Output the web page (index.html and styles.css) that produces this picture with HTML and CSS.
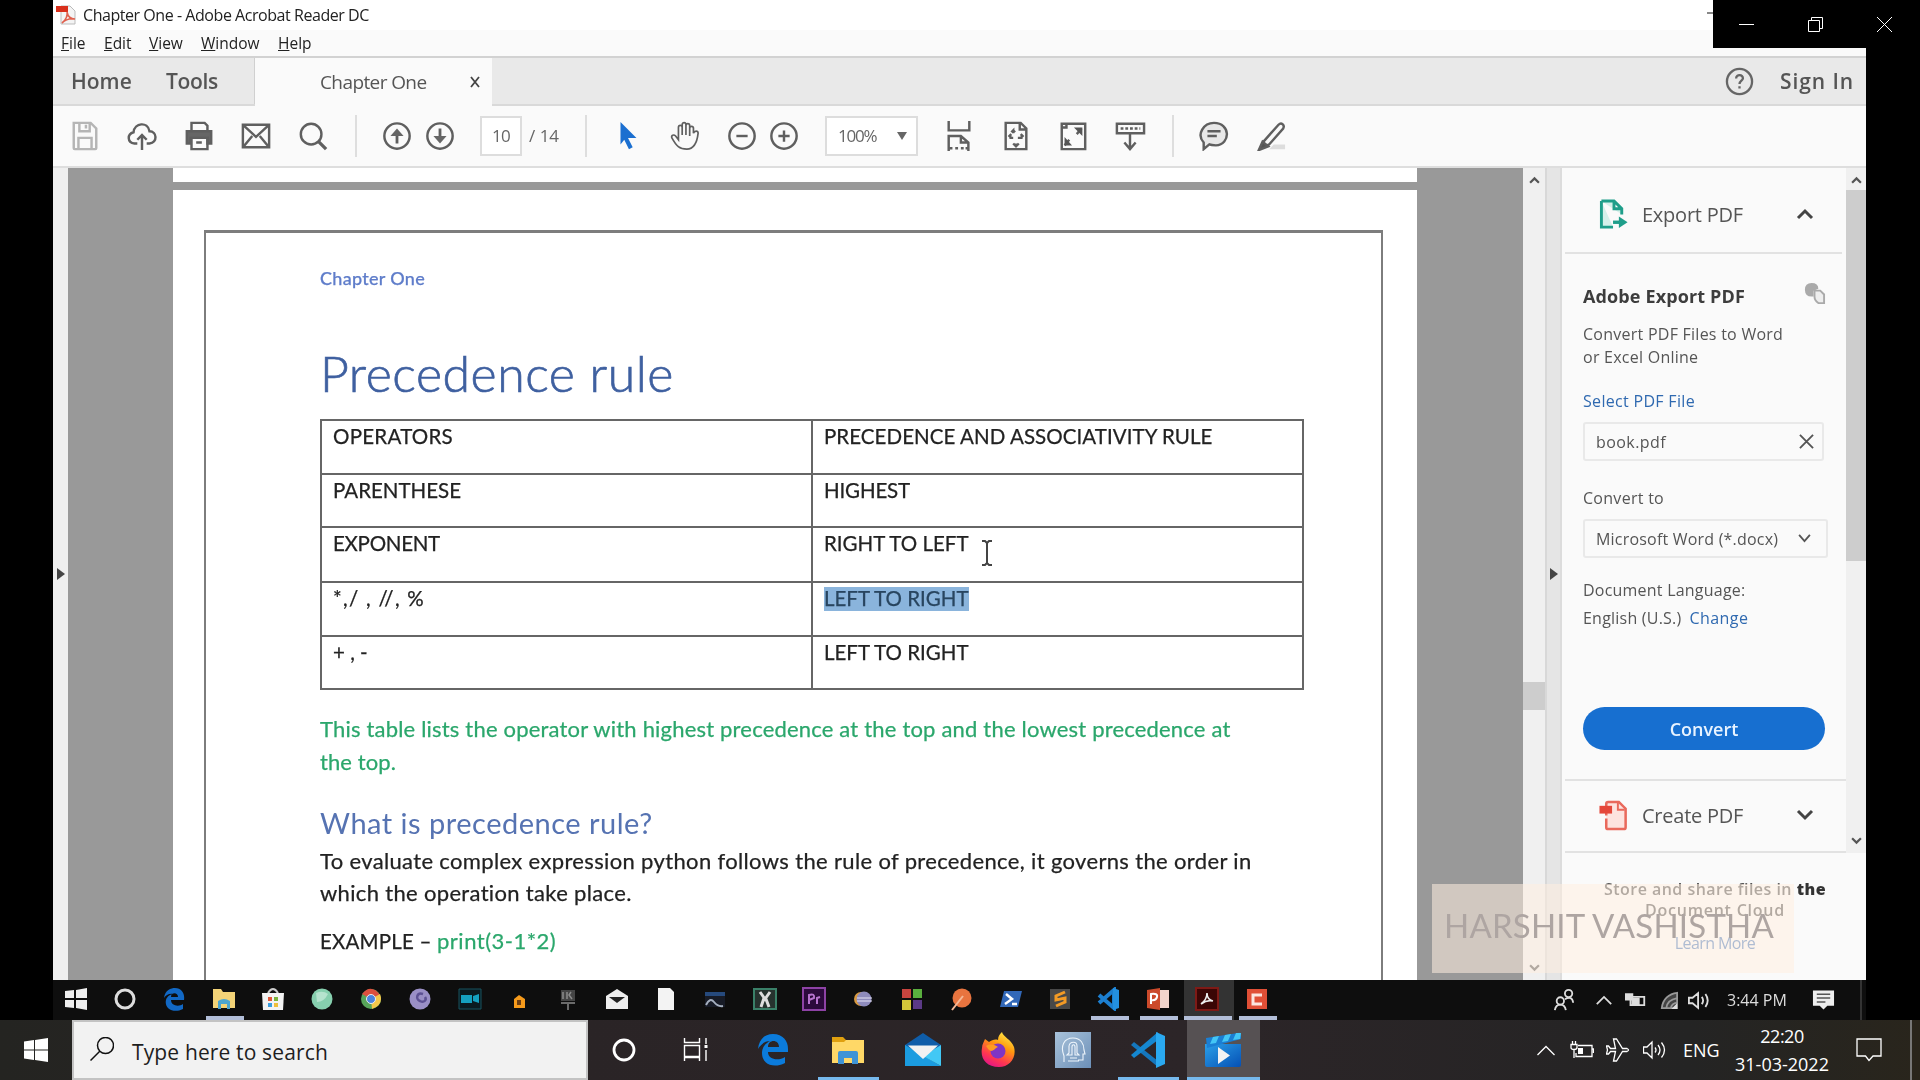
FILE: index.html
```html
<!DOCTYPE html>
<html lang="en">
<head>
<meta charset="utf-8">
<title>Chapter One - Adobe Acrobat Reader DC</title>
<link rel="stylesheet" href="styles.css">
</head>
<body>
<main class="player">
  <section class="capture">
    <div class="titlebar">
      <svg class="pdf-mini" viewBox="0 0 20 20"><path d="M5 1h9l5 5v13H5z" fill="#f4f4f4" stroke="#bbb"/><path d="M0 1h12v6H0z" fill="#d9301c"/><path d="M6 18c4-3 6-8 5-11 1 5 4 7 8 7-5-1-9 0-13 4z" fill="none" stroke="#e0604e" stroke-width="1.6"/></svg>
      <span class="t-title">Chapter One - Adobe Acrobat Reader DC</span>
      <i class="min-hint"></i>
    </div>
    <nav class="menubar">
      <span class="m-file"><u>F</u>ile</span><span class="m-edit"><u>E</u>dit</span><span class="m-view"><u>V</u>iew</span><span class="m-window"><u>W</u>indow</span><span class="m-help"><u>H</u>elp</span>
    </nav>
    <div class="tabs">
      <div class="tabs-left"><span class="t-home">Home</span><span class="t-tools">Tools</span></div>
      <div class="tab"><span class="t-tab">Chapter One</span><svg class="tab-x" viewBox="0 0 10 12"><path d="M1 1l8 10M9 1L1 11" stroke="#444" stroke-width="1.8"/></svg></div>
      <div class="tabs-right">
        <svg class="help" viewBox="0 0 30 30"><circle cx="15" cy="15" r="13" fill="none" stroke="#666" stroke-width="2.400"/><path d="M11.500 12c0-5 7.500-4.500 7 0-.3 2-3.500 2.500-3.500 5.500M15 20v2.300" fill="none" stroke="#666" stroke-width="2.400"/></svg>
        <span class="t-sign">Sign In</span>
      </div>
    </div>
    <div class="toolbar">
      <div class="group">
        <svg class="ic faint" viewBox="0 0 32 32"><path d="M4 2h18l6 6v21q0 1-1 1H5q-1 0-1-1zM10 2v9h11V2M9 30V18h14v12M17 4v4"/></svg>
        <svg class="ic" viewBox="0 0 32 32"><path d="M11 24H8c-8-1-8-10-1-12C8 2 22 0 24 11c8 0 9 12 0 13h-3M16 31V15M11 20l5-5 5 5"/></svg>
        <svg class="ic" viewBox="0 0 32 32"><path d="M8 10V2h14l3 3v5"/><path d="M3 11h26v13h-4v-6H7v6H3z" fill="#666"/><path d="M8 18h17v12H8zM13 23h6"/></svg>
        <svg class="ic" viewBox="0 0 32 32"><path d="M2 4h28v24H2zM3 5l13 12L29 5M3 27l9-11M29 27l-9-11"/></svg>
        <svg class="ic" viewBox="0 0 32 32"><circle cx="14" cy="14" r="11"/><path d="M22 22l8 8" stroke-width="3.500"/></svg>
      </div>
      <i class="sep"></i>
      <div class="group tight">
        <svg class="ic" viewBox="0 0 32 32"><circle cx="16" cy="16" r="13.500"/><path d="M16 24v-9" stroke-width="3"/><path d="M16 8l7 8H9z" fill="#666" stroke="none"/></svg>
        <svg class="ic" viewBox="0 0 32 32"><circle cx="16" cy="16" r="13.500"/><path d="M16 8v9" stroke-width="3"/><path d="M16 24l7-8H9z" fill="#666" stroke="none"/></svg>
      </div>
      <span class="pagebox"><span class="t-10">10</span></span><span class="t-14">/ 14</span>
      <i class="sep s2"></i>
      <div class="group">
        <svg class="ic" viewBox="0 0 32 32"><path d="M8 1l17 17h-9l5 10-4 2-5-10-4 5z" fill="#1b6fd0" stroke="none"/></svg>
        <svg class="ic" viewBox="0 0 32 32"><path d="M9 20V7c0-3 4-3 4 0v8V4c0-3 4-3 4 0v11V5c0-3 4-3 4 0v11V8c0-3 4-3 4 0v-1 6c1-3 5-3 5 0-1 9-4 17-12 17C10 30 7 27 2 18c-1-3 2-4 4-2l3 4z" stroke-width="1.800"/></svg>
        <svg class="ic" viewBox="0 0 32 32"><circle cx="16" cy="16" r="13.500"/><path d="M10 16h12"/></svg>
      </div>
      <svg class="ic plus" viewBox="0 0 32 32"><circle cx="16" cy="16" r="13.500"/><path d="M10 16h12M16 10v12"/></svg>
      <span class="zoombox"><span class="t-100">100%</span><i class="caret"></i></span>
      <div class="group">
        <svg class="ic" viewBox="0 0 32 32"><path d="M5 0v10h22V0M5 32V16h13l8 7v9M18 16v7h8M5 29h4M12 29h3M18 29h3M23 29h3"/></svg>
        <svg class="ic" viewBox="0 0 32 32"><path d="M5 2h16l6 6v22H5zM20 2v7h7M13 13v-3l-2 2M13 10l2 2M9 18h4M18 18h5M16 24v2M11 14l-2 2 2 2M21 14l2 2-2 2M13 24l3 3 3-3"/></svg>
        <svg class="ic" viewBox="0 0 32 32"><path d="M4 3h25v27H4zM9 3v4H4M20 14l5-6M12 20l-5 6"/><path d="M17 7h9v9zM15 26H7v-9z" fill="#555" stroke="none"/></svg>
        <svg class="ic" viewBox="0 0 32 32"><path d="M2 3h29v10H2zM6 8h3M11 8h3M16 8h3M21 8h3M26 8h1M16 14v15M10 23l6 7 6-7"/></svg>
      </div>
      <i class="sep s3"></i>
      <div class="group">
        <svg class="ic" viewBox="0 0 32 32"><path d="M5 30v-7C-3 14 5 2 16 2c18 0 18 23 2 24-4 0-5 0-7-1z" fill="#e8e8e8"/><path d="M9 11h14M9 16h10"/></svg>
        <svg class="ic" viewBox="0 0 32 32"><path d="M14 30h17v-5H19z" fill="#ddd" stroke="none"/><path d="M8 22L24 4c3-3 7 0 5 4L14 25c-2 2-7 0-6-3z"/><path d="M7 22l6 5-10 4z" fill="#555"/></svg>
      </div>
    </div>
    <div class="work">
      <div class="rail"><i class="tri"></i></div>
      <div class="canvas">
        <div class="prev-page"></div>
        <article class="page">
          <div class="frame">
            <div class="running"><span class="t-run">Chapter One</span></div>
            <h1><span class="t-h1">Precedence rule</span></h1>
            <table>
              <tr><td><span class="c1">OPERATORS</span></td><td><span class="c2">PRECEDENCE AND ASSOCIATIVITY RULE</span></td></tr>
              <tr><td><span class="c3">PARENTHESE</span></td><td><span class="c4">HIGHEST</span></td></tr>
              <tr class="tall"><td><span class="c5">EXPONENT</span></td><td class="rtl"><span class="c6">RIGHT TO LEFT</span><svg class="ibeam" viewBox="0 0 12 26"><path d="M1 1h3l2 2 2-2h3M6 3v20M1 25h3l2-2 2 2h3" fill="none" stroke="#444" stroke-width="2"/></svg></td></tr>
              <tr><td><span class="c7">*,/ , //, %</span></td><td><mark><span class="c8">LEFT TO RIGHT</span></mark></td></tr>
              <tr><td><span class="c9">+ , -</span></td><td><span class="c10">LEFT TO RIGHT</span></td></tr>
            </table>
            <p class="green"><span class="p1">This table lists the operator with highest precedence at the top and the lowest precedence at</span><br><span class="p2">the top.</span></p>
            <h2><span class="t-h2">What is precedence rule?</span></h2>
            <p class="body"><span class="p3">To evaluate complex expression python follows the rule of precedence, it governs the order in</span><br><span class="p4">which the operation take place.</span></p>
            <p class="example"><span class="p5">EXAMPLE – </span><span class="p6">print(3-1*2)</span></p>
          </div>
        </article>
      </div>
      <div class="scroll s-doc"><svg class="chev" viewBox="0 0 10 7"><path d="M1 6l4-4 4 4"/></svg><i class="thumb"></i><svg class="chev down" viewBox="0 0 10 7"><path d="M1 1l4 4 4-4"/></svg></div>
      <div class="splitter"><i class="tri"></i></div>
      <aside>
        <div class="aside-top">
          <div class="tools">
            <div class="tool export">
              <svg viewBox="0 0 30 32"><path d="M2 2h13l8 8v6M2 2v27h12M15 2v8h8" fill="#d5f0ea" stroke="#1f9e8a" stroke-width="3"/><path d="M14 24h8" stroke="#1f9e8a" stroke-width="3.500"/><path d="M20 18l9 6-9 6z" fill="#1f9e8a"/></svg>
              <span class="t-exp">Export PDF</span><svg class="arrow" viewBox="0 0 18 12"><path d="M2 10l7-7 7 7"/></svg>
            </div>
            <div class="form">
              <div class="form-title"><span class="t-aep">Adobe Export PDF</span><svg viewBox="0 0 24 24"><path d="M2 8q0-7 7-7t7 6l-5 2v6q-9 1-9-7z" fill="#aaa"/><path d="M12 9h6l4 4v9h-6q-4-3-4-7z" fill="#eee" stroke="#aaa" stroke-width="2"/></svg></div>
              <p class="desc"><span class="a1">Convert PDF Files to Word</span><br><span class="a2">or Excel Online</span></p>
              <p class="link"><span class="a3">Select PDF File</span></p>
              <div class="field"><span class="a4">book.pdf</span><svg viewBox="0 0 16 16"><path d="M1 1l14 14M15 1L1 15"/></svg></div>
              <p class="label"><span class="a5">Convert to</span></p>
              <div class="field wide"><span class="a6">Microsoft Word (*.docx)</span><svg class="v" viewBox="0 0 14 10"><path d="M1 1l6 7 6-7"/></svg></div>
              <p class="lang"><span class="a7">Document Language:</span><br><span class="a8">English (U.S.)</span><span class="a9">Change</span></p>
              <button><span class="a10">Convert</span></button>
            </div>
            <div class="tool create">
              <svg viewBox="0 0 30 32"><path d="M7 16V4q0-2 2-2h11l7 7v19q0 2-2 2H9q-2 0-2-2v-9" fill="#fde3df" stroke="#e9695c" stroke-width="2.600"/><path d="M0 6h13v8H0z" fill="#e5473a"/><path d="M19 3v7h7" fill="none" stroke="#e9695c" stroke-width="2"/></svg>
              <span class="t-cre">Create PDF</span><svg class="arrow" viewBox="0 0 18 12"><path d="M2 2l7 7 7-7"/></svg>
            </div>
          </div>
          <div class="scroll s-aside"><svg class="chev" viewBox="0 0 10 7"><path d="M1 6l4-4 4 4"/></svg><i class="thumb"></i><svg class="chev down" viewBox="0 0 10 7"><path d="M1 1l4 4 4-4"/></svg></div>
        </div>
        <div class="promo"><span class="b1">Store and share files in <b>the</b></span><span class="b2">Document Cloud</span><span class="b3">Learn More</span></div>
      </aside>
      <div class="watermark"><span class="t-wm">HARSHIT VASHISTHA</span></div>
    </div>
    <div class="bar1">
      <div class="apps1">
        <span><svg viewBox="0 0 24 24"><path d="M1 4l9-1v8H1zM12 3l11-2v10H12zM1 13h9v8l-9-1zM12 13h11v10l-11-2z" fill="#eee"/></svg></span>
        <span><svg viewBox="0 0 24 24"><circle cx="12" cy="12" r="9" fill="none" stroke="#ddd" stroke-width="3"/></svg></span>
        <span><svg viewBox="0 0 24 24"><path d="M2 11C3 3 9 1 13 1c7 0 10 6 9 12H9c0 6 8 7 12 4v5C11 27 2 21 4 13c1-4 5-6 8-6-5-1-8 1-10 4zM9 10h7c0-5-7-5-7 0z" fill="#1268c4" fill-rule="evenodd"/></svg></span>
        <span class="on"><svg viewBox="0 0 24 24"><path d="M1 2h8l2 3h12v16H1z" fill="#f3d377"/><path d="M6 22v-8q6-4 12 0v8h-3v-5H9v5z" fill="#4ba5cf"/></svg></span>
        <span><svg viewBox="0 0 24 24"><path d="M7 6q5-8 10 0" fill="none" stroke="#ccc" stroke-width="2"/><path d="M1 6h22l-1 17H2z" fill="#f3f3f3"/><path d="M7 10h4v4H7z" fill="#e0593a"/><path d="M13 10h4v4h-4z" fill="#7ab53c"/><path d="M7 16h4v4H7z" fill="#3a9ee0"/><path d="M13 16h4v4h-4z" fill="#efc03a"/></svg></span>
        <span><svg viewBox="0 0 24 24"><circle cx="12" cy="12" r="10.500" fill="#86cfae"/><path d="M6 6q7-3 12 1-4 8-11 8z" fill="#b5e3ce"/></svg></span>
        <span><svg viewBox="0 0 24 24"><circle cx="12" cy="12" r="10" fill="#58a45a"/><path d="M12 12L3 7q9-11 18 1z" fill="#dd4f3e"/><path d="M12 12l9-5q4 11-8 15z" fill="#f3c84b"/><circle cx="12" cy="12" r="4.500" fill="#4c83dd" stroke="#eee"/></svg></span>
        <span><svg viewBox="0 0 24 24"><circle cx="12" cy="12" r="10.500" fill="#9a8fc6"/><path d="M15 7c-6-2-8 5-3 7 4 2 7-1 5-4" fill="none" stroke="#5d5193" stroke-width="2.500"/></svg></span>
        <span><svg viewBox="0 0 24 24"><path d="M1 2h22v20H1z" fill="#0a1a20" stroke="#17525f"/><path d="M3 8h11v8H3zM15 9l6-2v9l-6-2z" fill="#15a0c0"/></svg></span>
        <span><svg viewBox="0 0 24 24"><path d="M7 21V12l5-4 6 4v9z" fill="#f59a1b"/><path d="M10 13h4v5h-4z" fill="#6b3d12"/></svg></span>
        <span><svg viewBox="0 0 24 24"><path d="M5 3h14v11H5z" fill="#444"/><path d="M7 5v7M11 5v7M15 5l-2 3 3 4M5 16h14M12 17v6" stroke="#8b8b8b" fill="none" stroke-width="1.500"/></svg></span>
        <span><svg viewBox="0 0 24 24"><path d="M1 9l11-7 11 7v13H1z" fill="#eee"/><path d="M4 10h16l-8 6z" fill="#222"/></svg></span>
        <span><svg viewBox="0 0 24 24"><path d="M4 1h12l4 4v18H4z" fill="#f3f3f3"/></svg></span>
        <span><svg viewBox="0 0 24 24"><path d="M2 5h20v4H2z" fill="#264a7d"/><path d="M2 9h20v11H2z" fill="#171b26"/><path d="M3 18q4-8 8-3t9 4" fill="none" stroke="#a5afbf" stroke-width="2"/></svg></span>
        <span><svg viewBox="0 0 24 24"><path d="M1 2h22v20H1z" fill="#26322e" stroke="#3a8068" stroke-width="2"/><path d="M7 5l5 7 5-7M8 20l3-9M16 20l-3-8" stroke="#ddd" stroke-width="3" fill="none"/></svg></span>
        <span><svg viewBox="0 0 24 24"><path d="M1 1h22v22H1z" fill="#2c0a3c" stroke="#8d42a5" stroke-width="2"/><path d="M7 17V8q6-2 5 3l-5 2M15 17v-6l3-1" stroke="#b873cf" stroke-width="2" fill="none"/></svg></span>
        <span><svg viewBox="0 0 24 24"><circle cx="10" cy="12" r="7" fill="#d99a3f"/><circle cx="13" cy="12" r="7.500" fill="#8e8bbd"/><path d="M6 11h15M6 14h15" stroke="#e5e3f5"/></svg></span>
        <span><svg viewBox="0 0 24 24"><path d="M2 2h9v9H2z" fill="#c8443e"/><path d="M13 2h9v9h-9z" fill="#5aaf3e"/><path d="M2 13h9v10H2z" fill="#d3c73a"/><path d="M13 13h9v9h-9z" fill="#5b3a86"/></svg></span>
        <span><svg viewBox="0 0 24 24"><circle cx="13" cy="11" r="9.500" fill="#e8743f"/><path d="M3 23l11-14" stroke="#f5b896" stroke-width="2"/></svg></span>
        <span><svg viewBox="0 0 24 24"><path d="M5 4h18l-4 16H1z" fill="#3268b8"/><path d="M7 7l6 5-7 5M13 17h5" stroke="#fff" stroke-width="2.500" fill="none"/></svg></span>
        <span><svg viewBox="0 0 24 24"><path d="M2 2h20v20H2z" fill="#484848"/><path d="M17 5L8 9v4l9-2v4l-9 4" stroke="#f29a25" stroke-width="3" fill="none"/></svg></span>
        <span class="on"><svg viewBox="0 0 24 24"><path d="M2 8l15 13V3L2 16" fill="none" stroke="#1c7fd0" stroke-width="4"/><path d="M16 1l6 2v18l-6 2z" fill="#2390e0"/></svg></span>
        <span class="on"><svg viewBox="0 0 24 24"><path d="M12 3h11v18H12z" fill="#f2d5cc"/><path d="M1 3l13-2v22L1 21z" fill="#cc4a2b"/><path d="M5 17V7q7-1 6 3t-6 3" stroke="#fff" stroke-width="2" fill="none"/></svg></span>
        <span class="on active"><svg viewBox="0 0 24 24"><path d="M1 1h22v22H1z" fill="#3a0605" stroke="#7e1a16" stroke-width="2"/><path d="M6 17c4-3 6-7 6-11 0 5 2 7 6 8-4-1-8 0-12 3z" fill="none" stroke="#eee" stroke-width="1.600"/></svg></span>
        <span class="on"><svg viewBox="0 0 24 24"><path d="M2 2h20v20H2z" fill="#e04f36"/><path d="M17 8H8v9h9" fill="none" stroke="#fbe5df" stroke-width="3"/></svg></span>
      </div>
      <div class="tray1">
        <svg class="x1" viewBox="0 0 24 24"><circle cx="17" cy="5" r="4"/><circle cx="8" cy="13" r="4"/><path d="M2 23q1-6 6-6t6 6M13 11q8-4 9 4"/></svg>
        <svg class="x2" viewBox="0 0 20 12"><path d="M2 10l8-8 8 8"/></svg>
        <svg class="x3" viewBox="0 0 24 16"><path d="M6 4h15v9H6z"/><path d="M8 6h7v6H8zM1 1h7v6H1z" fill="#ddd"/></svg>
        <svg class="x4" viewBox="0 0 20 20"><path d="M2 19C3 9 10 3 19 2v17zM7 19q1-9 12-11M12 19q1-5 7-6" fill="#444" stroke="#999"/><path d="M15 19l3-3v3z" fill="#fff"/></svg>
        <svg class="x5" viewBox="0 0 24 20"><path d="M1 7h4l6-5v16l-6-5H1zM15 6q3 4 0 8M19 3q5 7 0 14"/></svg>
        <span class="t-344">3:44 PM</span>
        <svg class="x6" viewBox="0 0 24 22"><path d="M1 1h22v16h-7l-4 4-4-4H1z" fill="#eee" stroke="none"/><path d="M5 5h14M5 9h14M5 13h9" stroke="#555" stroke-width="1.500"/></svg>
      </div>
    </div>
  </section>
  <div class="winctl">
    <svg viewBox="0 0 15 15"><path d="M0 7.500h15"/></svg>
    <svg viewBox="0 0 15 15"><path d="M.5 3.500h11v11H.5zM3.500 3.500v-3h11v11h-3"/></svg>
    <svg viewBox="0 0 15 15"><path d="M0 0l15 15M15 0L0 15"/></svg>
  </div>
</main>
<footer class="bar2">
  <div class="start"><svg viewBox="0 0 24 24"><path d="M0 3.400L10 2v9.500H0zM11 1.900L24 0v11.500H11zM0 12.500h10V22L0 20.600zM11 12.500h13V24l-13-1.900z" fill="#fff"/></svg></div>
  <div class="search"><svg viewBox="0 0 24 24"><circle cx="15.500" cy="8.500" r="8"/><path d="M10 14L.5 23.500"/></svg><span class="t-search">Type here to search</span></div>
  <div class="apps2">
    <span class="cortana"><svg viewBox="0 0 36 36"><circle cx="18" cy="18" r="10" fill="none" stroke="#fff" stroke-width="2.800"/></svg></span>
    <span class="taskview"><svg viewBox="0 0 36 36"><path d="M6.500 6v4.500h15V6M6.500 13.500h15v11h-15zM6.500 29v-3.500h15V29M28 6v6M28 18v11" fill="none" stroke="#fff" stroke-width="1.400"/><path d="M26.500 13h3v3h-3z" fill="#fff"/></svg></span>
    <span><svg viewBox="0 0 36 36"><path d="M3 17C4 7 10 2 18 2c10 0 15 7 15 15v3H13c0 8 11 9 17 5v6c-12 6-23 1-23-10 0-6 4-10 8-12-5 0-9 3-12 8zM13 15h11c0-8-11-8-11 0z" fill="#0b7bdb" fill-rule="evenodd"/></svg></span>
    <span class="on"><svg viewBox="0 0 36 36"><path d="M2 5h11l3 3h18v10H2z" fill="#e0a00f"/><path d="M2 10h12l2-2h18v23H2z" fill="#ffd867"/><path d="M8 32V21q0-2 2-2h16q2 0 2 2v11h-6v-6h-8v6z" fill="#3f94d6"/></svg></span>
    <span><svg viewBox="0 0 36 36"><path d="M0 13L18 1l18 12v5H0z" fill="#0f5da9"/><path d="M0 13l36 21H0z" fill="#1b9ce0"/><path d="M36 13v21L18 24z" fill="#42c8f5"/><path d="M3 13.500h30L18 27z" fill="#f2f2f2"/></svg></span>
    <span><svg viewBox="0 0 36 36"><defs><linearGradient id="ff" x1=".8" y1="0" x2=".3" y2="1"><stop offset="0" stop-color="#fff04a"/><stop offset=".4" stop-color="#ff980e"/><stop offset=".75" stop-color="#ff3750"/><stop offset="1" stop-color="#e31587"/></linearGradient></defs><path d="M5 7l4 3c3-2 6-3 9-2 0-4 2-6 4-8 1 5 9 7 12 15 3 11-5 20-15 20C6 35 0 26 2 16c0-4 2-6 3-9z" fill="url(#ff)"/><circle cx="18" cy="19" r="7.500" fill="#7f35c5"/><path d="M6 14c4-2 7-2 12 1-3 1-4 4-7 4-3-1-3-3-5-5z" fill="#ff9b22"/></svg></span>
    <span><svg viewBox="0 0 36 36"><defs><linearGradient id="hd" x2="1" y2="1"><stop stop-color="#a9c2da"/><stop offset="1" stop-color="#6c90b8"/></linearGradient></defs><path d="M0 0h36v36H0z" fill="url(#hd)"/><path d="M9 30v-6C5 14 9 6 18 6c8 0 11 6 11 12l1 4h-2v6h-5M13 29h11M15 26h7M12 23l2-2v-7c1-5 8-5 8 0v7l2 2h-4v-8c0-3-3-3-3 0v8z" fill="none" stroke="#eef5fb" stroke-width="1.100"/></svg></span>
    <span class="on"><svg viewBox="0 0 36 36"><path d="M1 13l3-3 24 19v6z" fill="#1577bd"/><path d="M1 23l3 3L28 8V0z" fill="#1587d0"/><path d="M26 0l9 4v28l-9 4z" fill="#2aa9f0"/></svg></span>
    <span class="on active"><svg viewBox="0 0 36 36"><defs><linearGradient id="mv" x2="1" y2="1"><stop stop-color="#2ba0e8"/><stop offset="1" stop-color="#0550b5"/></linearGradient></defs><path d="M0 12h36v21q0 2-2 2H2q-2 0-2-2z" fill="url(#mv)"/><path d="M1 6L33 1q3-1 3 2v4L2 16z" fill="#1a7fd4"/><path d="M8 5l6-1-3 7-6 1zM20 3l6-1-3 7-6 1zM31 1l5 0-1 6-7 1z" fill="#43c6f5"/><path d="M13 15l12 8.500L13 32z" fill="#f2f2f2"/></svg></span>
  </div>
  <div class="tray2">
    <svg class="y1" viewBox="0 0 18 11"><path d="M.5 10L9 1.500 17.500 10"/></svg>
    <svg class="y2" viewBox="0 0 24 18"><path d="M8 4.500h14v11H6V12M22.500 8h1v4M1 3.500h6v3q0 2-3 2t-3-2zM2.500 0v3M5.500 0v3M4 9v8"/><path d="M8 7h5v6H8z" fill="#fff" stroke="none"/></svg>
    <svg class="y3" viewBox="0 0 24 24"><path d="M.5 8h2l2 2.500h5L7.500 1h3l6 9.500H21q3 1.500 0 3h-4.500l-6 9.500h-3l2-9.500h-5L2.500 16h-2l1-4z"/></svg>
    <svg class="y4" viewBox="0 0 24 20"><path d="M.5 7H4l5-5v16l-5-5H.5zM12 7.500q2 2.500 0 5M15 5q4 5 0 10M18.500 2.500q6 7.500 0 15"/></svg>
    <span class="t-eng">ENG</span>
    <div class="clock"><span class="t-time">22:20</span><span class="t-date">31-03-2022</span></div>
    <svg class="y5" viewBox="0 0 26 24"><path d="M1 1h24v17h-8l-4 4.500L9.500 18H1z"/></svg>
    <i class="peek"></i>
  </div>
</footer>
</body>
</html>
```
FILE: styles.css
```css
* { box-sizing: border-box; }
body { margin: 0; width: 1920px; height: 1080px; overflow: hidden; background: #000; font-family: "Open Sans", "Noto Sans", sans-serif; color: #555; }
p, h1, h2 { margin: 0; font-weight: 400; }
svg { display: block; flex: none; }
span { white-space: nowrap; }

/* video frame */
.player { position: relative; height: 1020px; padding-left: 53px; background: #000; }
.capture { width: 1813px; height: 1020px; display: flex; flex-direction: column; background: #fff; overflow: hidden; filter: blur(.7px); }
.titlebar { height: 30px; display: flex; align-items: center; padding-left: 3px; background: #fff; color: #222; font-size: 16px; }
.t-title { letter-spacing: -.45px; }
.pdf-mini { width: 20px; height: 20px; margin-right: 7px; }
.min-hint { width: 8px; height: 2px; margin: -4px 0 0 1338px; background: #888; }
.menubar { height: 26px; display: flex; align-items: center; background: #fafafa; padding-left: 8px; font-size: 15.5px; color: #222; }
.menubar span { flex: none; }
.m-file { width: 43px; } .m-edit { width: 45px; } .m-view { width: 52px; } .m-window { width: 77px; }

/* tabs */
.tabs { height: 50px; display: flex; align-items: stretch; background: #e9e9e9; border-top: 2px solid #d2d2d2; border-bottom: 2px solid #d9d9d9; }
.tabs-left { width: 202px; display: flex; align-items: center; padding-left: 18px; font-size: 21px; font-weight: 600; border-right: 1px solid #d0d0d0; }
.t-home { width: 95px; }
.t-tools { letter-spacing: -.32px; }
.tab { width: 237px; margin-bottom: -2px; display: flex; align-items: center; padding-left: 65px; background: #fafafa; font-size: 19px; color: #555; }
.t-tab { letter-spacing: -.6px; }
.tab-x { width: 10px; height: 12px; margin-left: auto; margin-right: 12px; }
.tabs-right { flex: 1; display: flex; align-items: center; justify-content: flex-end; padding-right: 12px; gap: 26px; font-size: 21px; font-weight: 600; }
.t-sign { letter-spacing: .9px; }
.help { width: 29px; height: 29px; }

/* toolbar */
.toolbar { height: 62px; display: flex; align-items: center; padding: 0 0 1px 16px; background: #fafafa; border-bottom: 2px solid #dedede; font-size: 17px; color: #666; }
.group { display: flex; gap: 25px; }
.tight { gap: 11px; }
.ic { width: 32px; height: 30px; fill: none; stroke: #5f5f5f; stroke-width: 2.6; }
.faint { stroke: #b5b5b5; }
.sep { width: 2px; height: 42px; margin: 0 24px 0 26px; background: #dedede; }
.s2 { margin: 0 25px 0 23px; }
.s3 { margin: 0 24px 0 26px; }
.pagebox { width: 42px; height: 40px; margin: 0 7px 0 24px; display: flex; align-items: center; justify-content: center; border: 2px solid #ddd; background: #fff; }
.t-10 { letter-spacing: -.6px; }
.t-14 { width: 33px; }
.plus { margin-left: 10px; }
.zoombox { width: 93px; height: 40px; margin: 0 25px 0 25px; padding: 0 9px 0 11px; display: flex; align-items: center; justify-content: space-between; border: 2px solid #ddd; background: #fff; }
.t-100 { letter-spacing: -1.2px; }
.caret { border: 5px solid transparent; border-top: 8px solid #666; border-bottom: 0; }

/* document */
.work { position: relative; height: 812px; display: flex; }
.rail { width: 15px; background: #efefef; display: flex; align-items: center; padding-left: 4px; }
.tri { border: 6px solid transparent; border-left: 8px solid #444; border-right: 0; }
.canvas { width: 1455px; padding: 0 106px 0 105px; background: #999; }
.prev-page { height: 14px; background: #fff; }
.page { height: 790px; margin-top: 8px; padding: 40px 34px 0 31px; background: #fff; }
.frame { height: 750px; border: 2px solid #7d7d7d; border-top-width: 3px; border-bottom: 0; padding: 32px 0 0 114px; font-family: Lato, "Open Sans", sans-serif; font-size: 20.5px; color: #222; -webkit-text-stroke: .25px currentColor; }
.running { height: 26px; line-height: 26px; font-size: 18px; color: #5f7dca; font-weight: 500; letter-spacing: .3px; }
h1 { height: 128px; padding-top: 52px; line-height: 60px; font-size: 50px; font-weight: 300; color: #3f60a0; letter-spacing: .52px; -webkit-text-stroke: .7px currentColor; }
table { width: 984px; border-collapse: collapse; table-layout: fixed; }
tr { height: 53.5px; } .tall { height: 55px; }
td { border: 2px solid #666; padding: 0 0 0 11px; vertical-align: top; line-height: 30px; }
.c1 { letter-spacing: .26px; } .c2 { letter-spacing: .06px; } .c4 { letter-spacing: -.16px; } .c5 { letter-spacing: -.27px; } .c7 { letter-spacing: 1.27px; }
.rtl { position: relative; }
.ibeam { position: absolute; left: 168px; top: 12px; width: 12px; height: 26px; }
mark { display: inline-block; height: 24px; line-height: 23px; background: #8ab4dc; color: #28455f; margin-top: 4px; }
.green { padding-top: 22px; line-height: 33px; font-size: 22px; color: #2ba76c; }
.p1 { letter-spacing: .19px; } .p2 { letter-spacing: .1px; } .p3 { letter-spacing: .35px; } .p4 { letter-spacing: .33px; }
h2 { padding-top: 25px; line-height: 40px; font-size: 29px; color: #5673b2; letter-spacing: .5px; -webkit-text-stroke: 0; }
.body { padding-top: 2px; line-height: 32px; font-size: 22px; }
.example { padding-top: 16px; line-height: 32px; }
.p5 { white-space: pre; letter-spacing: .19px; } .p6 { font-size: 22px; color: #2ba76c; letter-spacing: .5px; }

.scroll { display: flex; flex-direction: column; align-items: center; background: #f0f0f0; }
.scroll .thumb { width: 100%; background: #cdcdcd; }
.chev { width: 11px; height: 8px; fill: none; stroke: #555; stroke-width: 2; }
.down { margin-top: auto; }
.s-doc { width: 22px; padding: 8px 0; } .s-doc .thumb { height: 28px; margin-top: 498px; }
.splitter { width: 17px; display: flex; align-items: center; padding-left: 3px; background: #e5e5e5; border-left: 2px solid #d8d8d8; border-right: 2px solid #dcdcdc; }

/* tools pane */
aside { width: 304px; background: #fafafa; }
.aside-top { display: flex; height: 685px; }
.tools { width: 284px; }
.tool { display: flex; align-items: center; font-size: 20px; color: #555; letter-spacing: -.24px; }
.tool > svg:first-child { width: 30px; height: 31px; margin-right: 13px; }
.tool .arrow { width: 18px; height: 12px; margin: 0 32px 0 auto; fill: none; stroke: #444; stroke-width: 3; }
.export { height: 86px; padding: 8px 0 0 34px; border-bottom: 2px solid #e2e2e2; margin: 0 4px 0 3px; }
.tool.export .arrow { margin-right: 28px; }
.form { height: 525px; padding: 28px 0 0 21px; font-size: 16px; }
.form-title { height: 28px; display: flex; justify-content: space-between; align-items: center; padding-right: 20px; font-size: 18px; font-weight: 700; color: #3d3d3d; }
.form-title svg { width: 23px; height: 23px; margin-top: -6px; }
.t-aep { letter-spacing: .13px; }
.desc { padding-top: 13px; line-height: 23px; letter-spacing: .25px; }
.link { padding-top: 20px; line-height: 24px; color: #2f69b0; letter-spacing: .31px; }
.field { width: 241px; height: 39px; margin-top: 9px; padding: 0 8px 0 11px; display: flex; align-items: center; justify-content: space-between; border: 2px solid #e9e9e9; border-radius: 3px; letter-spacing: .2px; }
.a4 { letter-spacing: .42px; }
.field svg { width: 15px; height: 15px; fill: none; stroke: #555; stroke-width: 2; }
.label { padding-top: 25px; line-height: 24px; letter-spacing: .28px; }
.wide { width: 245px; padding-right: 15px; } .field .v { width: 13px; height: 9px; }
.lang { padding-top: 18px; line-height: 28px; letter-spacing: .22px; }
.a9 { color: #2f69b0; margin-left: 8px; letter-spacing: .46px; }
button { display: block; width: 242px; height: 43px; margin-top: 75px; border: 0; border-radius: 22px; background: #176fd0; color: #e8f3ff; font: 600 18px "Open Sans", sans-serif; }
.create { height: 74px; padding: 0 0 2px 34px; margin-left: 3px; border-top: 2px solid #e2e2e2; border-bottom: 2px solid #e2e2e2; }
.s-aside { width: 20px; padding: 8px 0; margin-left: auto; } .s-aside .thumb { height: 371px; margin-top: 6px; }
.promo { display: flex; flex-direction: column; align-items: center; padding: 26px 0 0 2px; line-height: 21px; font-size: 16px; font-weight: 600; }
.b1 { letter-spacing: .47px; } .b2 { letter-spacing: .77px; }
.b3 { margin-top: 12px; font-weight: 400; color: #4f7fc0; letter-spacing: -.6px; }
.b1 b { color: #333; }
.watermark { position: absolute; left: 1379px; top: 716px; width: 362px; height: 89px; padding: 0 0 8px 12px; display: flex; align-items: center; background: rgba(255, 238, 224, .55); color: #aea5a2; font: 400 33px Lato, sans-serif; letter-spacing: .21px; }

/* recorded taskbar */
.bar1 { height: 40px; display: flex; background: #0e0e0e; justify-content: space-between; }
.apps1 { display: flex; }
.apps1 span { width: 49.2px; height: 40px; padding: 7px 0 0 11px; }
.apps1 svg { width: 24px; height: 24px; }
.apps1 .on { background: linear-gradient(#b2bed8, #b2bed8) 5px 36px / 38px 4px no-repeat; }
.apps1 .active { background: linear-gradient(#b2bed8, #b2bed8) 0 36px / 48px 4px no-repeat, #333; }
.tray1 { display: flex; align-items: center; color: #ddd; font-size: 16px; border-right: 2px solid #333; margin-right: 4px; padding-right: 25px; }
.tray1 svg { fill: none; stroke: #ddd; stroke-width: 2; }
.x1 { width: 22px; height: 22px; margin-right: 20px; } .x2 { width: 18px; height: 11px; margin-right: 12px; } .x3 { width: 22px; height: 15px; margin-right: 13px; } .x4 { width: 18px; height: 18px; margin-right: 10px; } .x5 { width: 22px; height: 19px; margin-right: 17px; } .t-344 { width: 57px; } .x6 { width: 23px; height: 22px; margin-left: 28px; }

/* player window buttons */
.winctl { position: absolute; right: 0; top: 0; width: 207px; height: 48px; padding-left: 26px; display: flex; gap: 54px; align-items: center; background: #000; }
.winctl svg { width: 15px; height: 15px; fill: none; stroke: #fff; stroke-width: 1; }

/* taskbar */
.bar2 { position: relative; height: 60px; display: flex; background: linear-gradient(90deg, #242421 0, #2a2426 30%, #2c2528 62%, #242424 88%, #29251c 100%); color: #fff; }
.start { width: 72px; padding: 18px 24px; } .start svg { width: 24px; height: 24px; }
.search { width: 516px; height: 60px; display: flex; align-items: center; padding-left: 16px; gap: 18px; background: #f2f2f2; border: 2px solid #c3c3c3; color: #1e1e1e; font-size: 21px; letter-spacing: .14px; }
.search svg { width: 24px; height: 24px; fill: none; stroke: #111; stroke-width: 1.5; margin-bottom: 3px; }
.t-search { padding-top: 3px; }
.apps2 { display: flex; width: 673px; }
.apps2 span { width: 75px; height: 60px; padding: 12px 19px; flex: none; }
.apps2 .cortana { width: 72px; padding-left: 18px; }
.apps2 .taskview { width: 76px; padding-left: 18px; }
.apps2 svg { width: 36px; height: 36px; }
.apps2 .on { background: linear-gradient(#76b9ed, #76b9ed) 7px 57px / 61px 3px no-repeat; }
.apps2 .active { background: linear-gradient(#76b9ed, #76b9ed) 1px 57px / 73px 3px no-repeat, linear-gradient(#565153, #565153) 1px 0 / 73px 60px no-repeat; }
.tray2 { display: flex; align-items: center; margin-left: 276px; font-size: 18px; }
.tray2 svg { fill: none; stroke: #fff; stroke-width: 1.3; }
.y1 { width: 18px; height: 11px; margin-right: 15px; } .y2 { width: 24px; height: 18px; margin-right: 12px; } .y3 { width: 24px; height: 24px; margin-right: 13px; } .y4 { width: 24px; height: 20px; margin-right: 16px; } .t-eng { width: 32px; margin-right: 20px; }
.clock { width: 94px; display: flex; flex-direction: column; align-items: center; line-height: 28px; }
.t-time { letter-spacing: -.5px; }
.y5 { width: 26px; height: 24px; margin-left: 27px; }
.peek { width: 2px; height: 60px; margin-left: 28px; background: #777; }
```
